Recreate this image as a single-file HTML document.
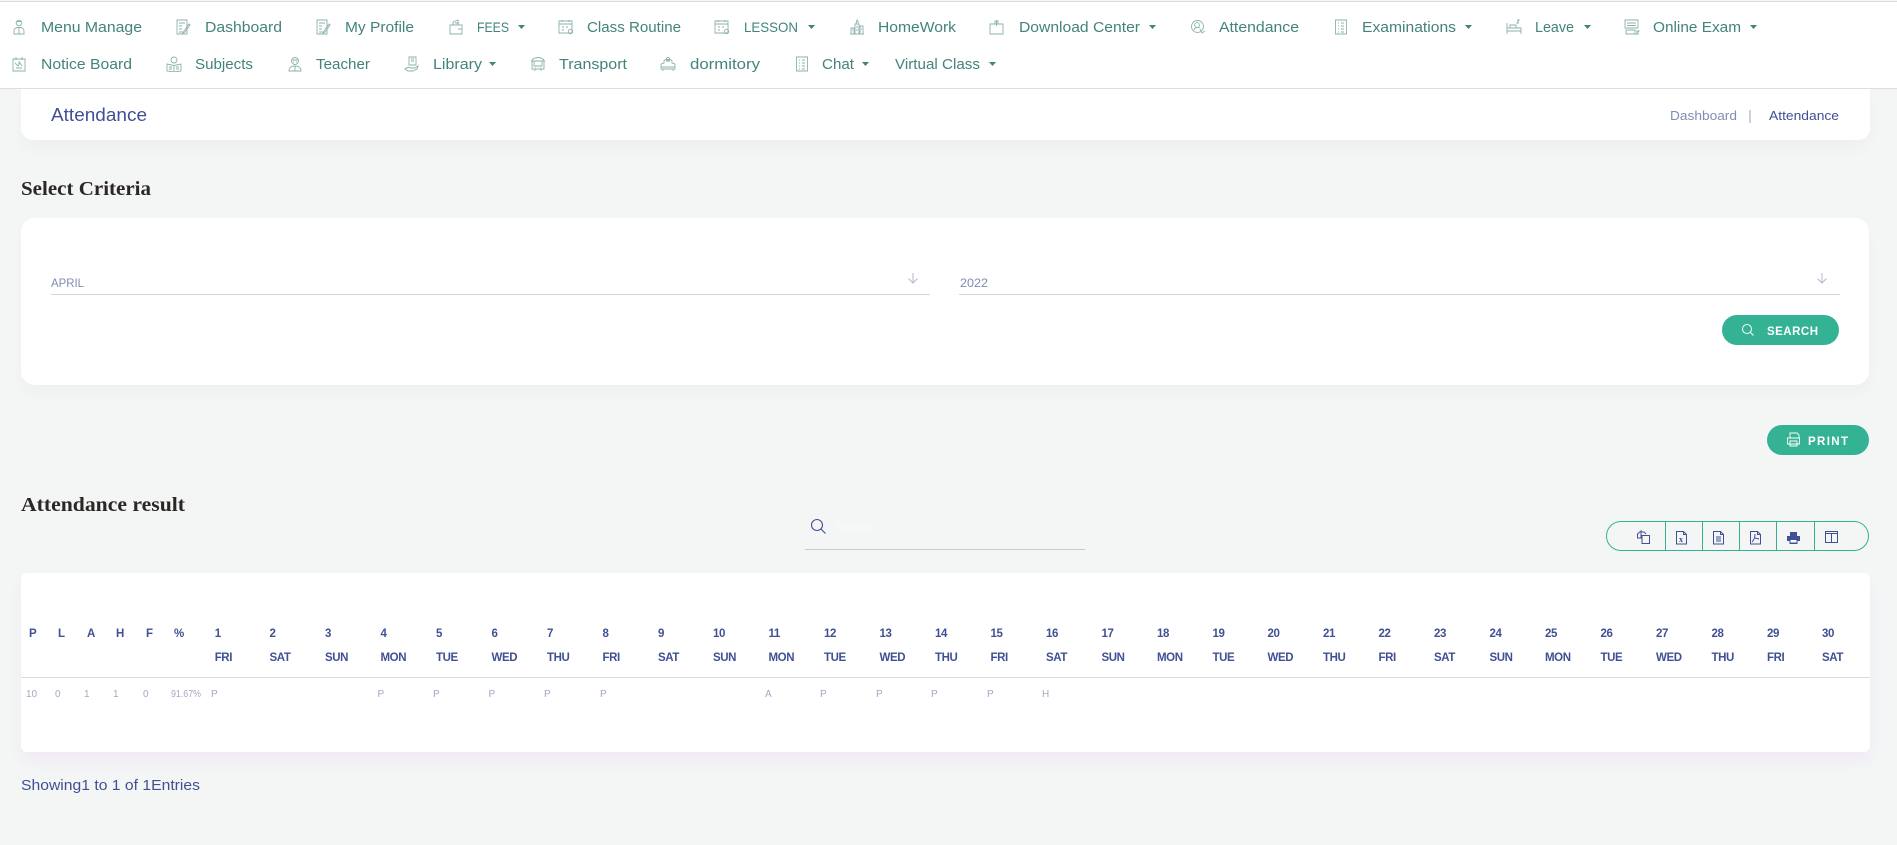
<!DOCTYPE html>
<html lang="en">
<head>
<meta charset="utf-8">
<title>Attendance</title>
<style>
html,body{margin:0;padding:0;width:1897px;height:845px;overflow:hidden;background:#f4f6f6;font-family:"Liberation Sans",sans-serif}
.box{position:absolute;background:#fff}
#top{left:0;top:1px;width:1897px;height:86px;border-top:1px solid #dcdcdc;border-bottom:1px solid #dedede}
#crumb{left:21px;top:89px;width:1849px;height:51px;border-radius:0 0 12px 12px;box-shadow:0 10px 15px rgba(0,0,0,.025)}
#crit{left:21px;top:218px;width:1848px;height:167px;border-radius:14px;box-shadow:0 10px 15px rgba(0,0,0,.025)}
#tbl{left:21px;top:573px;width:1849px;height:179px;border-radius:6px;box-shadow:0 10px 15px rgba(236,208,244,.3)}
#group{position:absolute;left:1606px;top:521px;width:261px;height:28px;border:1px solid #34b394;border-radius:15px}
.btn{position:absolute;background:#34b394;border-radius:15px;height:30px}
svg#o{position:absolute;left:0;top:0}
.nav{font:15px "Liberation Sans",sans-serif;fill:#42837a}
.h{font:bold 11.5px "Liberation Sans",sans-serif;letter-spacing:-.4px;fill:#415094}
.d{font:10px "Liberation Sans",sans-serif;fill:#a3a8c2}
.s{font:bold 20px "Liberation Serif",serif;fill:#2b2725}
.i{fill:none;stroke:#8db2ad;stroke-width:.9}
.e{fill:none;stroke:#415094;stroke-width:1}
.b{font:bold 11.5px "Liberation Sans",sans-serif;fill:#fff}
</style>
</head>
<body>
<div class="box" id="top"></div>
<div class="box" id="crumb"></div>
<div class="box" id="crit"></div>
<div class="box" id="tbl"></div>
<div class="btn" style="left:1722px;top:315px;width:117px"></div>
<div class="btn" style="left:1767px;top:425px;width:102px"></div>
<div id="group"></div>
<svg id="o" width="1897" height="845" viewBox="0 0 1897 845" xmlns="http://www.w3.org/2000/svg">
<defs>
<symbol id="person" viewBox="0 0 16 16"><circle cx="8" cy="4" r="2.8"/><path d="M5.5 2.5h5M3 15v-3a3.5 3.5 0 0 1 3.5-3.5h3A3.5 3.5 0 0 1 13 12v3zM8 8.5v6"/></symbol>
<symbol id="note" viewBox="0 0 16 16"><path d="M2 1h10v14H2zM4 4h6M4 7h3M4 10h3M4 13h4M14 5l-5 7-1 2 2-1 5-7z"/></symbol>
<symbol id="bag" viewBox="0 0 16 16"><path d="M2 6h12v9H2zM5 6V3l5-2v5M7 4h4M10 10h4"/></symbol>
<symbol id="cal" viewBox="0 0 16 16"><path d="M1 2h13v12H1zM1 5h13M4 1v2M11 1v2M4 8h2M8 8h2M4 11h2"/><circle cx="12.5" cy="12.5" r="2.2"/></symbol>
<symbol id="home" viewBox="0 0 16 16"><path d="M1 15h14M2 15V9h3v6M6 15V5h4v10M11 15V7h3v8M7 5l1-4 2 3M7 8h2M7 11h2M3 11h1M12 10h1"/></symbol>
<symbol id="dl" viewBox="0 0 16 16"><path d="M1 5h13v10H1zM6 5V2h3v3M7.5 1v6"/></symbol>
<symbol id="att" viewBox="0 0 16 16"><circle cx="7.5" cy="7.5" r="6"/><circle cx="7" cy="6" r="2.4"/><path d="M4 11a4 4 0 0 1 6-2M10 10l2 4 3-2"/></symbol>
<symbol id="list" viewBox="0 0 16 16"><path d="M2.5 1h11v14h-11zM5 4h1M8 4h3M5 7h1M8 7h3M5 10h1M8 10h3M5 13h1M8 13h3"/></symbol>
<symbol id="bed" viewBox="0 0 16 16"><path d="M1 15V4M15 15V9H1M1 12h14M4 9V6h6v3M11 1h2l-2 3h2"/></symbol>
<symbol id="exam" viewBox="0 0 16 16"><path d="M1 1h13v8H1zM3 4h9M3 6.5h9M2 11h9v4H2zM12 12h3l-3 3h3"/></symbol>
<symbol id="notice" viewBox="0 0 16 16"><path d="M2 3h12v12H2zM5 1v3M11 1v3M4 7l3 3 2-3 2 3M5 12h6M8 5v3"/></symbol>
<symbol id="book" viewBox="0 0 16 16"><circle cx="8" cy="4" r="3"/><path d="M1 8l7 1.5L15 8v7l-7 1-7-1zM8 9.5V16M3 11h3M3 13h3M10 11h3M10 13h3"/></symbol>
<symbol id="teacher" viewBox="0 0 16 16"><circle cx="8" cy="5" r="3.5"/><path d="M4.5 4h7M6 6h1M9 6h1M2 15c0-3.5 2.5-5 6-5s6 1.500 6 5zM8 10v5"/></symbol>
<symbol id="lib" viewBox="0 0 16 16"><path d="M5 1h7v8H5zM7 3h3M7 5h3M1 13c2-2 4-2 6-1h4l3-2-1 3-4 2H4z"/></symbol>
<symbol id="bus" viewBox="0 0 16 16"><path d="M2 5c0-2 3-3.5 6-3.5S14 3 14 5v8H2zM1 5h14M4 5v5h8V5M5 13v2M11 13v2M5 11.5h.5M10.500 11.5h.5"/></symbol>
<symbol id="dorm" viewBox="0 0 16 16"><path d="M1 8l3-1V5c0-2 8-2 8 0v2l3 1v5H1zM1 11h14M3 13v2M13 13v2M6 5h4"/><circle cx="8" cy="3" r="1.5"/></symbol>
</defs>

<!-- nav icons -->
<g class="i">
<use href="#person" x="11" y="19" width="16" height="16"/>
<use href="#note" x="175" y="19" width="16" height="16"/>
<use href="#note" x="315" y="19" width="16" height="16"/>
<use href="#bag" x="448" y="19" width="16" height="16"/>
<use href="#cal" x="558" y="19" width="16" height="16"/>
<use href="#cal" x="714" y="19" width="16" height="16"/>
<use href="#home" x="849" y="19" width="16" height="16"/>
<use href="#dl" x="989" y="19" width="16" height="16"/>
<use href="#att" x="1190" y="19" width="16" height="16"/>
<use href="#list" x="1333" y="19" width="16" height="16"/>
<use href="#bed" x="1506" y="19" width="16" height="16"/>
<use href="#exam" x="1624" y="19" width="16" height="16"/>
<use href="#notice" x="11" y="56" width="16" height="16"/>
<use href="#book" x="166" y="56" width="16" height="16"/>
<use href="#teacher" x="287" y="56" width="16" height="16"/>
<use href="#lib" x="404" y="56" width="16" height="16"/>
<use href="#bus" x="530" y="56" width="16" height="16"/>
<use href="#dorm" x="660" y="56" width="16" height="16"/>
<use href="#list" x="794" y="56" width="16" height="16"/>
</g>

<!-- nav text -->
<g class="nav">
<text x="41" y="32" textLength="101" lengthAdjust="spacingAndGlyphs">Menu Manage</text>
<text x="205" y="32" textLength="77" lengthAdjust="spacingAndGlyphs">Dashboard</text>
<text x="345" y="32" textLength="69" lengthAdjust="spacingAndGlyphs">My Profile</text>
<text x="477" y="32" textLength="32" lengthAdjust="spacingAndGlyphs" style="font-size:14px">FEES</text>
<text x="587" y="32" textLength="94" lengthAdjust="spacingAndGlyphs">Class Routine</text>
<text x="744" y="32" textLength="54" lengthAdjust="spacingAndGlyphs" style="font-size:14px">LESSON</text>
<text x="878" y="32" textLength="78" lengthAdjust="spacingAndGlyphs">HomeWork</text>
<text x="1019" y="32" textLength="121" lengthAdjust="spacingAndGlyphs">Download Center</text>
<text x="1219" y="32" textLength="80" lengthAdjust="spacingAndGlyphs">Attendance</text>
<text x="1362" y="32" textLength="94" lengthAdjust="spacingAndGlyphs">Examinations</text>
<text x="1535" y="32" textLength="39" lengthAdjust="spacingAndGlyphs">Leave</text>
<text x="1653" y="32" textLength="88" lengthAdjust="spacingAndGlyphs">Online Exam</text>
<text x="41" y="69" textLength="91" lengthAdjust="spacingAndGlyphs">Notice Board</text>
<text x="195" y="69" textLength="58" lengthAdjust="spacingAndGlyphs">Subjects</text>
<text x="316" y="69" textLength="54" lengthAdjust="spacingAndGlyphs">Teacher</text>
<text x="433" y="69" textLength="49" lengthAdjust="spacingAndGlyphs">Library</text>
<text x="559" y="69" textLength="68" lengthAdjust="spacingAndGlyphs">Transport</text>
<text x="690" y="69" textLength="70" lengthAdjust="spacingAndGlyphs">dormitory</text>
<text x="822" y="69" textLength="32" lengthAdjust="spacingAndGlyphs">Chat</text>
<text x="895" y="69" textLength="85" lengthAdjust="spacingAndGlyphs">Virtual Class</text>
</g>
<!-- carets -->
<g fill="#42837a">
<path d="M518 25h7l-3.5 4zM808 25h7l-3.5 4zM1149 25h7l-3.5 4zM1465 25h7l-3.5 4zM1584 25h7l-3.5 4zM1750 25h7l-3.5 4zM489 62h7l-3.5 4zM862 62h7l-3.5 4zM989 62h7l-3.5 4z"/>
</g>

<!-- breadcrumb -->
<text x="51" y="121" textLength="96" lengthAdjust="spacingAndGlyphs" style="font:18px 'Liberation Sans',sans-serif;fill:#415094">Attendance</text>
<text x="1670" y="120" textLength="67" lengthAdjust="spacingAndGlyphs" style="font:13px 'Liberation Sans',sans-serif;fill:#828bb2">Dashboard</text>
<rect x="1749.5" y="110" width="1" height="13" fill="#9aa1c0"/>
<text x="1769" y="120" textLength="70" lengthAdjust="spacingAndGlyphs" style="font:13px 'Liberation Sans',sans-serif;fill:#415094">Attendance</text>

<!-- headings -->
<text class="s" x="21" y="195" textLength="130" lengthAdjust="spacingAndGlyphs">Select Criteria</text>
<text class="s" x="21" y="511" textLength="164" lengthAdjust="spacingAndGlyphs">Attendance result</text>

<!-- selects -->
<text x="51" y="287" textLength="33" lengthAdjust="spacingAndGlyphs" style="font:12px 'Liberation Sans',sans-serif;fill:#828bb2">APRIL</text>
<rect x="51" y="294" width="879" height="1" fill="#d4d5de"/>
<path d="M913 273v10M908.5 278.500l4.5 4.500 4.5-4.500" fill="none" stroke="#b5b8cf"/>
<text x="960" y="287" textLength="28" lengthAdjust="spacingAndGlyphs" style="font:12px 'Liberation Sans',sans-serif;fill:#828bb2">2022</text>
<rect x="959" y="294" width="881" height="1" fill="#d4d5de"/>
<path d="M1822 273v10M1817.5 278.500l4.500 4.500 4.500-4.500" fill="none" stroke="#b5b8cf"/>

<!-- buttons -->
<circle cx="1747" cy="329" r="4.5" fill="none" stroke="#fff"/><path d="M1750.5 332.5l3 3" stroke="#fff"/>
<text class="b" x="1767" y="335" textLength="51" lengthAdjust="spacing">SEARCH</text>
<path d="M1790 438v-5h7l2 2v3M1787.5 438h12v6h-12zM1790 441h7v5h-7z" fill="none" stroke="#fff" stroke-width=".9"/>
<text class="b" x="1808" y="445" textLength="40" lengthAdjust="spacing">PRINT</text>

<!-- table search -->
<circle cx="817" cy="525" r="5.5" fill="none" stroke="#415094" stroke-width="1.1"/><path d="M821 529l4.500 4.500" stroke="#415094" stroke-width="1.1"/>
<text x="835" y="532" style="font:13px 'Liberation Sans',sans-serif;fill:#f8f9f9">Search</text>
<rect x="805" y="549" width="280" height="1" fill="#c6c9da"/>

<!-- export group -->
<g fill="#34b394"><rect x="1665" y="521" width="1" height="30"/><rect x="1702" y="521" width="1" height="30"/><rect x="1739" y="521" width="1" height="30"/><rect x="1776" y="521" width="1" height="30"/><rect x="1814" y="521" width="1" height="30"/></g>
<g class="e" transform="translate(0,-1)">
<path d="M1641 536v-3h3l2 2M1637.5 535l3.500-3v7h-3.500zM1642 536.5h7.500v8H1642z"/>
<path d="M1676.5 532.5h7l3 3v9.500h-10zM1683.5 532.5v3h3"/>
<path d="M1713.5 532.5h7l3 3v9.500h-10zM1720.5 532.5v3h3M1716 538h5M1716 540h5M1716 542h5"/>
<path d="M1750.5 532.5h7l3 3v9.500h-10zM1757.5 532.5v3h3M1755 535c0 3-1 6-3 8M1755 539l4 1"/>
<rect x="1825.5" y="532.5" width="12" height="11"/><path d="M1825.5 534.5h12M1831.5 534.5v9"/>
</g>
<text x="1679" y="542" style="font:bold 8px 'Liberation Serif',serif;fill:#415094">x</text>
<g transform="translate(0,-1)"><path d="M1790 537v-4h7v4zM1787 537h13v5h-2.500v3h-8v-3H1787z" fill="#415094"/><rect x="1790.5" y="541" width="6" height="2.5" fill="#fff"/></g>

<!-- table header -->
<rect x="21" y="677" width="1849" height="1" fill="#dcdcdf"/>
<g class="h">
<text x="29" y="637">P</text><text x="58" y="637">L</text><text x="87" y="637">A</text><text x="116" y="637">H</text><text x="146" y="637">F</text><text x="174" y="637">%</text>
<text x="214.7" y="637">1</text><text x="214.7" y="661">FRI</text>
<text x="269.5" y="637">2</text><text x="269.5" y="661">SAT</text>
<text x="325" y="637">3</text><text x="325" y="661">SUN</text>
<text x="380.5" y="637">4</text><text x="380.5" y="661">MON</text>
<text x="436" y="637">5</text><text x="436" y="661">TUE</text>
<text x="491.5" y="637">6</text><text x="491.5" y="661">WED</text>
<text x="547" y="637">7</text><text x="547" y="661">THU</text>
<text x="602.5" y="637">8</text><text x="602.5" y="661">FRI</text>
<text x="658" y="637">9</text><text x="658" y="661">SAT</text>
<text x="713" y="637">10</text><text x="713" y="661">SUN</text>
<text x="768.5" y="637">11</text><text x="768.5" y="661">MON</text>
<text x="824" y="637">12</text><text x="824" y="661">TUE</text>
<text x="879.5" y="637">13</text><text x="879.5" y="661">WED</text>
<text x="935" y="637">14</text><text x="935" y="661">THU</text>
<text x="990.5" y="637">15</text><text x="990.5" y="661">FRI</text>
<text x="1046" y="637">16</text><text x="1046" y="661">SAT</text>
<text x="1101.5" y="637">17</text><text x="1101.5" y="661">SUN</text>
<text x="1157" y="637">18</text><text x="1157" y="661">MON</text>
<text x="1212.5" y="637">19</text><text x="1212.5" y="661">TUE</text>
<text x="1267.5" y="637">20</text><text x="1267.5" y="661">WED</text>
<text x="1323" y="637">21</text><text x="1323" y="661">THU</text>
<text x="1378.5" y="637">22</text><text x="1378.5" y="661">FRI</text>
<text x="1434" y="637">23</text><text x="1434" y="661">SAT</text>
<text x="1489.5" y="637">24</text><text x="1489.5" y="661">SUN</text>
<text x="1545" y="637">25</text><text x="1545" y="661">MON</text>
<text x="1600.5" y="637">26</text><text x="1600.5" y="661">TUE</text>
<text x="1656" y="637">27</text><text x="1656" y="661">WED</text>
<text x="1711.5" y="637">28</text><text x="1711.5" y="661">THU</text>
<text x="1767" y="637">29</text><text x="1767" y="661">FRI</text>
<text x="1822" y="637">30</text><text x="1822" y="661">SAT</text>
</g>

<!-- table row -->
<g class="d">
<text x="26" y="697">10</text><text x="55" y="697">0</text><text x="84" y="697">1</text><text x="113" y="697">1</text><text x="143" y="697">0</text><text x="171" y="697" textLength="30" lengthAdjust="spacingAndGlyphs">91.67%</text>
<text x="211" y="697">P</text><text x="377.5" y="697">P</text><text x="433" y="697">P</text><text x="488.5" y="697">P</text><text x="544" y="697">P</text><text x="600" y="697">P</text>
<text x="765" y="697">A</text><text x="820" y="697">P</text><text x="876" y="697">P</text><text x="931" y="697">P</text><text x="987" y="697">P</text><text x="1042" y="697">H</text>
</g>

<text x="21" y="790" textLength="179" lengthAdjust="spacingAndGlyphs" style="font:14.5px 'Liberation Sans',sans-serif;fill:#415094">Showing1 to 1 of 1Entries</text>
</svg>
</body>
</html>
